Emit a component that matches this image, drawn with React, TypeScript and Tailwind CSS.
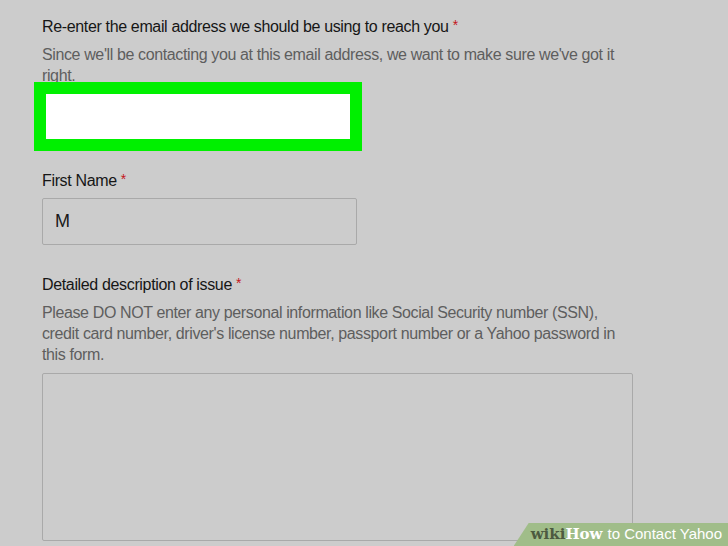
export default function App() {
  const font = { fontFamily: '"Liberation Sans", Arial, sans-serif' };

  return (
    <div className="relative h-[546px] w-[728px] overflow-hidden bg-[#cccccc]" style={font}>
      <div className="flex flex-col pl-[42px] pt-4">
        {/* Email */}
        <label className="text-[16px] leading-[22px] tracking-[-0.35px] text-[#161616]">
          Re-enter the email address we should be using to reach you<span className="relative -top-[2px] ml-1 text-[14px] text-[#c4161c]">*</span>
        </label>
        <p className="mt-[6px] w-[590px] text-[16px] leading-[21px] tracking-[-0.38px] text-[#5e5e5e]">
          Since we'll be contacting you at this email address, we want to make sure we've got it right.
        </p>
        <div className="-ml-2 -mt-[4px] h-[69px] w-[328px] border-[12px] border-[#00f000] bg-white" />

        {/* First name */}
        <label className="mt-[19px] text-[16px] leading-[22px] tracking-[-0.35px] text-[#161616]">
          First Name<span className="relative -top-[2px] ml-1 text-[14px] text-[#c4161c]">*</span>
        </label>
        <div className="mt-[6px] flex h-[47px] w-[315px] items-center rounded-[2px] border border-[#a9a9a9] px-3 text-[18px] text-[#1a1a1a]">
          M
        </div>

        {/* Description */}
        <label className="mt-[29px] text-[16px] leading-[22px] tracking-[-0.35px] text-[#161616]">
          Detailed description of issue<span className="relative -top-[2px] ml-1 text-[14px] text-[#c4161c]">*</span>
        </label>
        <p className="mt-[6px] w-[590px] text-[16px] leading-[21px] tracking-[-0.38px] text-[#5e5e5e]">
          Please DO NOT enter any personal information like Social Security number (SSN), credit card number, driver's license number, passport number or a Yahoo password in this form.
        </p>
        <div className="mt-[8px] h-[168px] w-[591px] rounded-[2px] border border-[#a9a9a9]" />
      </div>

      {/* watermark */}
      <div className="absolute bottom-0 right-0 flex h-[23px] items-center bg-[#a0bd89] pl-[17px] pr-[6px] [clip-path:polygon(15px_0,100%_0,100%_100%,0_100%)]">
        <span className="text-[15px] font-bold text-[#4c5a40]" style={{ fontFamily: '"DejaVu Serif", serif' }}>wiki</span>
        <span className="text-[15px] font-bold text-white" style={{ fontFamily: '"DejaVu Serif", serif' }}>How</span>
        <span className="ml-[5px] text-[15px] text-white" style={font}>to Contact Yahoo</span>
      </div>
    </div>
  );
}
